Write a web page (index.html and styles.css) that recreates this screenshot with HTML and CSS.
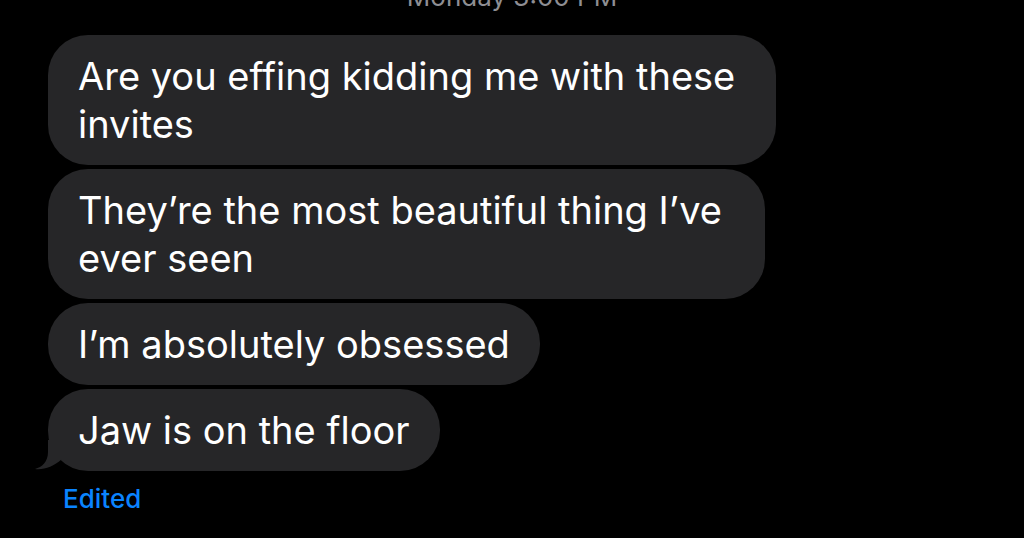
FILE: index.html
```html
<!DOCTYPE html>
<html>
<head>
<meta charset="utf-8">
<link rel="stylesheet" href="styles.css">
</head>
<body>
<div class="thread">
  <div class="timestamp">Monday 3:00 PM</div>
  <div class="messages">
    <div class="bubble bubble-wide">Are you effing kidding me with these invites</div>
    <div class="bubble bubble-mid">They’re the most beautiful thing I’ve ever seen</div>
    <div class="bubble">I’m absolutely obsessed</div>
    <div class="bubble bubble-last">Jaw is on the floor
      <svg class="tail" width="28" height="30" viewBox="0 0 28 30"><path d="M13 0 L13 12 C 13 22, 7 27, 0 29 C 9 30, 18 27, 27 19 L27 0 Z" fill="#262628"/></svg>
    </div>
  </div>
  <div class="edited">Edited</div>
</div>
</body>
</html>
```
FILE: styles.css
```css
html, body {
  margin: 0;
  padding: 0;
  background: #000;
  overflow: hidden;
  height: 538px;
}
.thread {
  font-family: Inter, "Noto Sans", sans-serif;
  color: #fff;
}
.timestamp {
  margin-top: -18px;
  height: 30px;
  line-height: 30px;
  font-size: 26px;
  color: #8e8e93;
  text-align: center;
}
.messages {
  margin-top: 23px;
  padding-left: 48px;
  display: flex;
  flex-direction: column;
  align-items: flex-start;
  gap: 4px;
}
.bubble {
  position: relative;
  background: #262628;
  border-radius: 40px;
  padding: 17px 30px;
  font-size: 38px;
  line-height: 48px;
  box-sizing: border-box;
}
.bubble-wide { width: 728px; }
.bubble-mid { width: 717px; }
.tail {
  position: absolute;
  left: -13px;
  bottom: 1px;
}
.edited {
  margin-top: 12px;
  padding-left: 63px;
  font-size: 26px;
  font-weight: 500;
  color: #0a84ff;
}
```
